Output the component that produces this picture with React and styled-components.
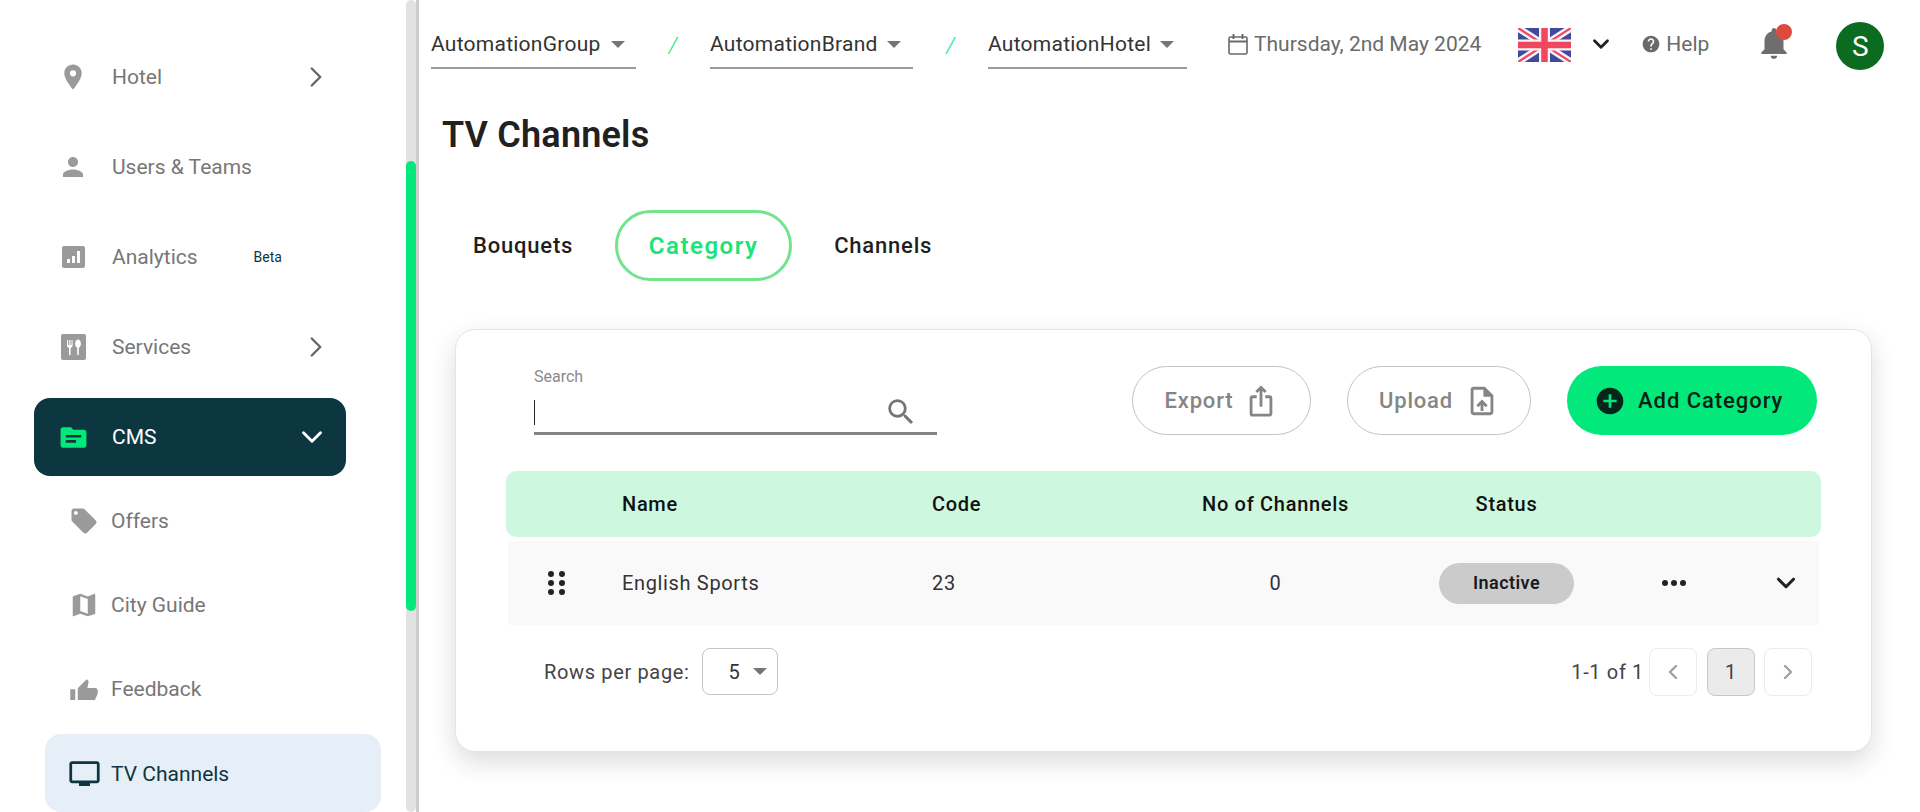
import React from 'react';
import styled, { createGlobalStyle } from 'styled-components';
import {
  MdLocationOn, MdPerson, MdTopic, MdLocalOffer, MdMap, MdThumbUp, MdOutlineTv,
  MdSearch, MdHelp, MdNotifications, MdAddCircle, MdIosShare, MdUploadFile,
} from 'react-icons/md';
import { ChevronRight, ChevronDown, ChevronLeft } from 'lucide-react';

const Global = createGlobalStyle`
  html, body { margin: 0; padding: 0; background: #fff; height: 100%; overflow: hidden; }
  body { font-family: Roboto, "Liberation Sans", sans-serif; }
  * { box-sizing: border-box; }
`;

const Page = styled.div`
  display: flex;
  width: 1920px;
  height: 812px;
  overflow: hidden;
`;

const Sidebar = styled.aside`
  display: flex;
  flex: 0 0 419px;
  height: 812px;
  border-right: 3px solid #cdcdcd;
`;

const Nav = styled.nav`
  flex: 0 0 406px;
  display: flex;
  flex-direction: column;
  align-items: flex-start;
  padding: 38px 0 0 34px;
`;

const ScrollTrack = styled.div`
  flex: 0 0 10px;
  height: 812px;
  background: #e2e2e2;
  border-radius: 5px;
  padding-top: 161px;
`;

const ScrollThumb = styled.div`
  height: 450px;
  background: #02e87a;
  border-radius: 5px;
`;

const NavRow = styled.div`
  display: flex;
  align-items: center;
  flex: 0 0 78px;
  width: 312px;
  margin-bottom: ${p => (p.$active ? 6 : 12)}px;
  padding: 0 ${p => (p.$active ? 17 : 13)}px 0 16px;
  border-radius: 16px;
  background: ${p => (p.$active ? '#0d3740' : 'transparent')};
  color: ${p => (p.$active ? '#fff' : '#777')};
`;

const SubRow = styled.div`
  display: flex;
  align-items: center;
  flex: 0 0 78px;
  width: 336px;
  margin: 0 0 6px 11px;
  padding-left: 16px;
  border-radius: 16px;
  background: ${p => (p.$active ? '#e6eff7' : 'transparent')};
  color: ${p => (p.$active ? '#0d3640' : '#777')};
`;

const IconSlot = styled.span`
  flex: 0 0 46px;
  display: flex;
  align-items: center;
  justify-content: center;
  color: ${p => p.$color || '#9a9a9a'};
`;

const ThumbClip = styled.span`
  display: flex;
  height: 22px;
  overflow: hidden;
  align-items: flex-start;
`;

const NavLabel = styled.span`
  margin-left: ${p => p.$gap}px;
  padding-top: ${p => (p.$active ? 2 : 0)}px;
  font-size: 21px;
  line-height: 24px;
  white-space: nowrap;
`;

const BetaTag = styled.span`
  margin-left: 56px;
  font-size: 14px;
  color: #0d3640;
`;

const NavChevron = styled.span`
  margin-left: auto;
  display: flex;
  color: ${p => (p.$active ? '#fff' : '#666')};
`;

const Main = styled.main`
  flex: 1;
  min-width: 0;
  display: flex;
  flex-direction: column;
`;

const TopBar = styled.header`
  display: flex;
  align-items: flex-start;
  height: 88px;
  padding: 21px 0 0 12px;
`;

const ContextSelect = styled.div`
  display: flex;
  align-items: center;
  justify-content: flex-start;
  width: ${p => p.$w}px;
  height: 48px;
  border-bottom: 2px solid #9a9a9a;
  font-size: 21px;
  letter-spacing: 0.25px;
  color: #333;
`;

const Caret = styled.span`
  width: 0;
  height: 0;
  margin-left: ${p => p.$gap || 10}px;
  border-left: 7.5px solid transparent;
  border-right: 7.5px solid transparent;
  border-top: 7px solid #757575;
`;

const Slash = styled.span`
  width: ${p => p.$w}px;
  height: 48px;
  display: flex;
  align-items: center;
  justify-content: center;
  font-size: 22px;
  font-weight: 300;
  font-style: italic;
  color: #02e87a;
`;

const DateBox = styled.div`
  display: flex;
  align-items: center;
  gap: 6px;
  height: 46px;
  margin-left: 41px;
  font-size: 21px;
  color: #6a6a6a;
  white-space: nowrap;
`;

const FlagBox = styled.div`
  display: flex;
  margin: 7px 0 0 37px;
  width: 53px;
  height: 34px;
`;

const LangChevron = styled.div`
  display: flex;
  height: 46px;
  align-items: center;
  margin-left: 17px;
  color: #222;
`;

const HelpBox = styled.div`
  display: flex;
  align-items: center;
  gap: 5px;
  height: 46px;
  margin-left: 27px;
  font-size: 21px;
  color: #6a6a6a;
`;

const BellBox = styled.div`
  position: relative;
  display: flex;
  margin: 3px 0 0 46px;
  color: #6e6e6e;
`;

const BellDot = styled.span`
  position: absolute;
  top: 0;
  right: 1px;
  width: 16px;
  height: 16px;
  border-radius: 50%;
  background: #dd4b3e;
`;

const Avatar = styled.div`
  display: flex;
  align-items: center;
  justify-content: center;
  width: 48px;
  height: 48px;
  margin: 1px 0 0 43px;
  border-radius: 50%;
  background: #0a6b21;
  color: #fff;
  font-size: 28px;
`;

const Title = styled.h1`
  margin: 25px 0 0 23px;
  font-size: 36px;
  line-height: 44px;
  font-weight: 600;
  letter-spacing: 0.2px;
  color: #212121;
`;

const Tabs = styled.div`
  display: flex;
  align-items: center;
  gap: 42px;
  height: 71px;
  margin: 53px 0 0 23px;
  padding-left: 31px;
`;

const Tab = styled.div`
  font-size: 22px;
  font-weight: 500;
  letter-spacing: 0.8px;
  color: #1f1f1f;
`;

const ActiveTab = styled.div`
  display: flex;
  align-items: center;
  justify-content: center;
  width: 177px;
  height: 71px;
  border: 3px solid #72e48c;
  border-radius: 36px;
  font-size: 24px;
  font-weight: 600;
  letter-spacing: 1.5px;
  color: #1de47a;
`;

const Card = styled.section`
  width: 1417px;
  height: 423px;
  margin: 48px 0 0 36px;
  padding: 36px 50px 0 50px;
  background: #fff;
  border: 1px solid #e4e4e4;
  border-radius: 20px;
  box-shadow: 0 10px 26px rgba(0, 0, 0, 0.14);
`;

const Toolbar = styled.div`
  display: flex;
  align-items: flex-start;
  height: 105px;
`;

const SearchField = styled.div`
  position: relative;
  width: 403px;
  height: 68px;
  margin: 1px 0 0 28px;
  border-bottom: 3px solid #848484;
`;

const SearchLabel = styled.label`
  position: absolute;
  left: 0;
  top: 0;
  font-size: 16px;
  line-height: 20px;
  color: #8a8a8a;
`;

const Cursor = styled.span`
  position: absolute;
  left: 0;
  top: 33px;
  width: 1px;
  height: 25px;
  background: #222;
`;

const SearchIcon = styled.span`
  position: absolute;
  right: 19px;
  top: 28px;
  display: flex;
  color: #757575;
`;

const GhostButton = styled.div`
  display: flex;
  align-items: center;
  justify-content: center;
  gap: ${p => p.$gap}px;
  width: ${p => p.$w}px;
  height: 69px;
  margin-left: ${p => p.$ml}px;
  border: 1px solid #c2c2c2;
  border-radius: 35px;
  font-size: 22px;
  font-weight: 500;
  letter-spacing: 0.8px;
  color: #858585;
`;

const AddButton = styled.div`
  display: flex;
  align-items: center;
  gap: 12px;
  width: 250px;
  height: 69px;
  margin-left: 36px;
  padding-left: 27px;
  border-radius: 35px;
  background: #02e87a;
  font-size: 22px;
  font-weight: 500;
  letter-spacing: 0.95px;
  color: #0a1f14;
`;

const AddIcon = styled.span`
  display: flex;
  color: #04261a;
`;

const columns = first => `${first}px 310px 270px 147px 90px 135px 88px 24px 91px 18px`;

const HeadRow = styled.div`
  display: grid;
  grid-template-columns: ${columns(116)};
  align-items: center;
  height: 66px;
  border-radius: 10px;
  background: #cef7e0;
  font-size: 20px;
  font-weight: 500;
  letter-spacing: 0.7px;
  color: #111;
`;

const BodyRow = styled.div`
  display: grid;
  grid-template-columns: ${columns(114)};
  align-items: center;
  height: 84px;
  margin: 4px 2px 0;
  background: #f9f9f9;
  font-size: 20px;
  letter-spacing: 0.65px;
  color: #333;
`;

const HeadSpan = styled.span`
  grid-column: ${p => p.$col};
  white-space: nowrap;
  text-align: ${p => p.$align || 'left'};
`;

const Cell = styled.span`
  grid-column: ${p => p.$col};
  display: flex;
  justify-content: ${p => p.$justify || 'flex-start'};
  color: ${p => p.$color || 'inherit'};
`;

const DragDots = styled.span`
  display: grid;
  grid-template-columns: 6px 6px;
  gap: 3px 5px;
  margin-left: 40px;
`;

const Dot = styled.i`
  width: 6px;
  height: 6px;
  border-radius: 50%;
  background: #222;
`;

const MoreDots = styled.span`
  display: flex;
  gap: 3px;
`;

const StatusPill = styled.span`
  display: flex;
  align-items: center;
  justify-content: center;
  width: 135px;
  height: 41px;
  padding-bottom: 2px;
  border-radius: 21px;
  background: #cbcbcb;
  font-size: 18px;
  font-weight: 600;
  letter-spacing: 0.45px;
  color: #1a1a1a;
`;

const Footer = styled.div`
  display: flex;
  align-items: center;
  height: 48px;
  margin-top: 23px;
  padding: 0 9px 0 38px;
  font-size: 20px;
  letter-spacing: 0.65px;
  color: #444;
`;

const PageSize = styled.div`
  display: flex;
  align-items: center;
  align-self: flex-start;
  width: 76px;
  height: 47px;
  margin-left: 12px;
  padding-left: 26px;
  border: 1px solid #c4c4c4;
  border-radius: 8px;
  color: #333;
`;

const RangeText = styled.span`
  margin-left: auto;
`;

const PageButton = styled.div`
  display: flex;
  align-items: center;
  justify-content: center;
  width: 48px;
  height: 48px;
  margin-left: ${p => p.$ml}px;
  border: 1px solid ${p => (p.$current ? '#c8c8c8' : '#ebebeb')};
  border-radius: 8px;
  background: ${p => (p.$current ? '#ebebeb' : '#fff')};
  color: ${p => (p.$current ? '#444' : '#a0a0a0')};
`;

const Flag = () => (
  <svg width="53" height="34" viewBox="0 0 53 34">
    <rect width="53" height="34" rx="2" fill="#3f4a9a" />
    <path d="M0 0L53 34M53 0L0 34" stroke="#f3f3f8" strokeWidth="7" />
    <path d="M0 0L53 34M53 0L0 34" stroke="#f0475c" strokeWidth="2.2" />
    <path d="M26.5 0V34M0 17H53" stroke="#f3f3f8" strokeWidth="11" />
    <path d="M26.5 0V34M0 17H53" stroke="#f0475c" strokeWidth="6.5" />
  </svg>
);

const CalendarIcon = () => (
  <svg width="20" height="22" viewBox="0 0 20 22" fill="none" stroke="#6a6a6a" strokeWidth="1.6">
    <rect x="1" y="4" width="18" height="17" rx="1.5" />
    <path d="M1 8.5H19" strokeWidth="2" />
    <path d="M5.5 1V6M14.5 1V6" strokeWidth="2" />
  </svg>
);

const ServicesIcon = () => (
  <svg width="25" height="26" viewBox="0 0 25 26">
    <rect width="25" height="26" rx="2" fill="#9a9a9a" />
    <path d="M6 6v5.5c0 1.3.8 2.2 2 2.4V21h1.6v-7.1c1.2-.2 2-1.1 2-2.4V6h-1.1v5H9.4V6H8.2v5H7.1V6z" fill="#fff" />
    <path d="M17 5.5c-1.7 0-2.9 1.9-2.9 4.3 0 2 .9 3.5 2.1 3.9V21h1.6v-7.3c1.2-.4 2.1-1.9 2.1-3.9 0-2.4-1.2-4.3-2.9-4.3z" fill="#fff" />
  </svg>
);

const AnalyticsIcon = () => (
  <svg width="23" height="22" viewBox="0 0 23 22">
    <rect width="23" height="22" rx="2" fill="#9a9a9a" />
    <path d="M5 13h3v4H5zM10 10h3v7h-3zM15 5h3v12h-3z" fill="#fff" />
  </svg>
);

const mainItems = [
  { icon: <MdLocationOn size={30} />, label: 'Hotel', chevron: true },
  { icon: <MdPerson size={30} />, label: 'Users & Teams' },
  { icon: <AnalyticsIcon />, label: 'Analytics', beta: true },
  { icon: <ServicesIcon />, label: 'Services', chevron: true },
];

const subItems = [
  { icon: <MdLocalOffer size={30} />, label: 'Offers' },
  { icon: <MdMap size={30} />, label: 'City Guide' },
  { icon: <ThumbClip><MdThumbUp size={30} /></ThumbClip>, label: 'Feedback' },
];

export default function App() {
  return (
    <Page>
      <Global />
      <Sidebar>
        <Nav>
          {mainItems.map(item => (
            <NavRow key={item.label}>
              <IconSlot>{item.icon}</IconSlot>
              <NavLabel $gap={16}>{item.label}</NavLabel>
              {item.beta && <BetaTag>Beta</BetaTag>}
              {item.chevron && <NavChevron><ChevronRight size={34} strokeWidth={1.7} /></NavChevron>}
            </NavRow>
          ))}
          <NavRow $active>
            <IconSlot $color="#02e87a"><MdTopic size={31} /></IconSlot>
            <NavLabel $gap={16}>CMS</NavLabel>
            <NavChevron $active><ChevronDown size={34} strokeWidth={2} /></NavChevron>
          </NavRow>
          {subItems.map(item => (
            <SubRow key={item.label}>
              <IconSlot>{item.icon}</IconSlot>
              <NavLabel $gap={4}>{item.label}</NavLabel>
            </SubRow>
          ))}
          <SubRow $active>
            <IconSlot $color="#0d3640"><MdOutlineTv size={33} /></IconSlot>
            <NavLabel $gap={4} $active>TV Channels</NavLabel>
          </SubRow>
        </Nav>
        <ScrollTrack><ScrollThumb /></ScrollTrack>
      </Sidebar>
      <Main>
        <TopBar>
          <ContextSelect $w={205}>AutomationGroup<Caret $gap={10} /></ContextSelect>
          <Slash $w={74}>/</Slash>
          <ContextSelect $w={203}>AutomationBrand<Caret $gap={9} /></ContextSelect>
          <Slash $w={75}>/</Slash>
          <ContextSelect $w={199}>AutomationHotel<Caret $gap={9} /></ContextSelect>
          <DateBox><CalendarIcon />Thursday, 2nd May 2024</DateBox>
          <FlagBox><Flag /></FlagBox>
          <LangChevron><ChevronDown size={26} strokeWidth={2.6} /></LangChevron>
          <HelpBox><MdHelp size={20} />Help</HelpBox>
          <BellBox><MdNotifications size={38} /><BellDot /></BellBox>
          <Avatar>S</Avatar>
        </TopBar>
        <Title>TV Channels</Title>
        <Tabs>
          <Tab>Bouquets</Tab>
          <ActiveTab>Category</ActiveTab>
          <Tab>Channels</Tab>
        </Tabs>
        <Card>
          <Toolbar>
            <SearchField>
              <SearchLabel>Search</SearchLabel>
              <Cursor />
              <SearchIcon><MdSearch size={34} /></SearchIcon>
            </SearchField>
            <GhostButton $w={179} $ml={195} $gap={11}>Export<MdIosShare size={34} /></GhostButton>
            <GhostButton $w={184} $ml={36} $gap={12}>Upload<MdUploadFile size={34} /></GhostButton>
            <AddButton><AddIcon><MdAddCircle size={32} /></AddIcon>Add Category</AddButton>
          </Toolbar>
          <HeadRow>
            <HeadSpan $col={2}>Name</HeadSpan>
            <HeadSpan $col={3}>Code</HeadSpan>
            <HeadSpan $col={4}>No of Channels</HeadSpan>
            <HeadSpan $col={6} $align="center">Status</HeadSpan>
          </HeadRow>
          <BodyRow>
            <Cell $col={1}>
              <DragDots>{[0, 1, 2, 3, 4, 5].map(i => <Dot key={i} />)}</DragDots>
            </Cell>
            <Cell $col={2}>English Sports</Cell>
            <Cell $col={3}>23</Cell>
            <Cell $col={4} $justify="center">0</Cell>
            <Cell $col={6}><StatusPill>Inactive</StatusPill></Cell>
            <Cell $col={8} $justify="center"><MoreDots><Dot /><Dot /><Dot /></MoreDots></Cell>
            <Cell $col={10} $justify="center" $color="#222"><ChevronDown size={30} strokeWidth={2.5} style={{ flex: 'none' }} /></Cell>
          </BodyRow>
          <Footer>
            Rows per page:
            <PageSize>5<Caret $gap={13} /></PageSize>
            <RangeText>1-1 of 1</RangeText>
            <PageButton $ml={5}><ChevronLeft size={24} strokeWidth={2.4} /></PageButton>
            <PageButton $ml={10} $current>1</PageButton>
            <PageButton $ml={9}><ChevronRight size={24} strokeWidth={2.4} /></PageButton>
          </Footer>
        </Card>
      </Main>
    </Page>
  );
}
